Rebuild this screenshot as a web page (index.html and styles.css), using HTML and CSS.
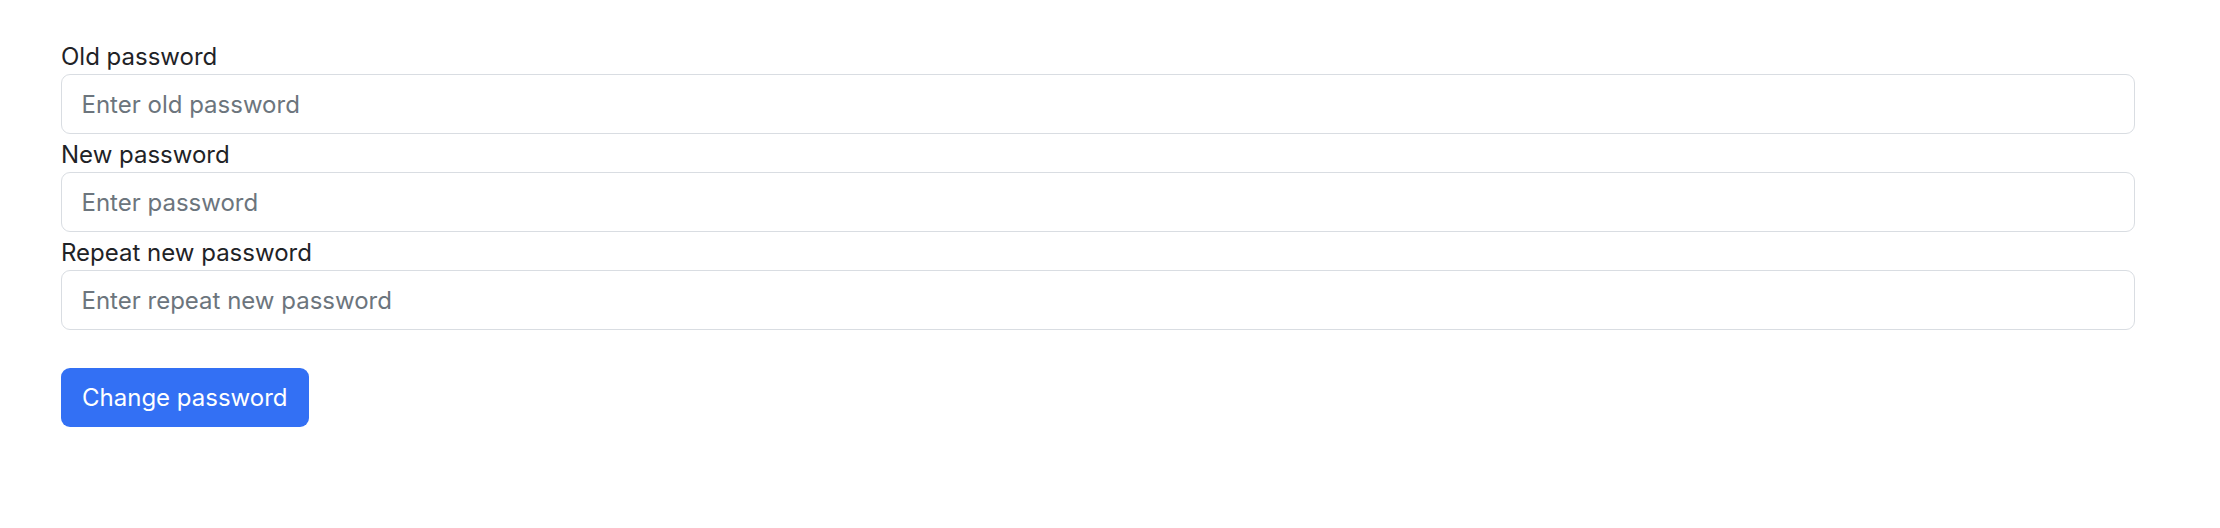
FILE: index.html
```html
<!DOCTYPE html>
<html lang="en">
<head>
<meta charset="utf-8">
<title>Change password</title>
<link rel="stylesheet" href="styles.css">
</head>
<body>
<form class="form">
  <div class="group">
    <label class="label" for="old">Old password</label>
    <input class="control" id="old" type="password" placeholder="Enter old password">
  </div>
  <div class="group">
    <label class="label" for="new">New password</label>
    <input class="control" id="new" type="password" placeholder="Enter password">
  </div>
  <div class="group">
    <label class="label" for="rep">Repeat new password</label>
    <input class="control" id="rep" type="password" placeholder="Enter repeat new password">
  </div>
  <div class="actions">
    <button class="btn" type="button">Change password</button>
  </div>
</form>
</body>
</html>
```

FILE: styles.css
```css
html, body {
  margin: 0;
  background: #ffffff;
}
body {
  font-family: Inter, "Liberation Sans", Arial, sans-serif;
  font-size: 24px;
  color: #212529;
}
.form {
  display: flex;
  flex-direction: column;
  padding: 36px 85px 0 61px;
}
.group {
  display: flex;
  flex-direction: column;
}
.label {
  display: block;
  height: 38px;
  line-height: 41px;
  font-size: 24px;
  color: #1f2327;
  overflow: visible;
}
.control {
  box-sizing: border-box;
  display: block;
  width: 100%;
  height: 60px;
  padding: 0 19.5px;
  font-family: inherit;
  font-size: 24px;
  color: #212529;
  background: #fff;
  border: 1.4px solid #d9dde2;
  border-radius: 9px;
  outline: none;
}
.control::placeholder {
  color: #6c757d;
  opacity: 1;
}
.actions {
  margin-top: 38px;
}
.btn {
  box-sizing: border-box;
  height: 59px;
  padding: 0 21px;
  font-family: inherit;
  font-size: 24px;
  color: #fff;
  background: #3370f4;
  border: none;
  border-radius: 9px;
}
```
